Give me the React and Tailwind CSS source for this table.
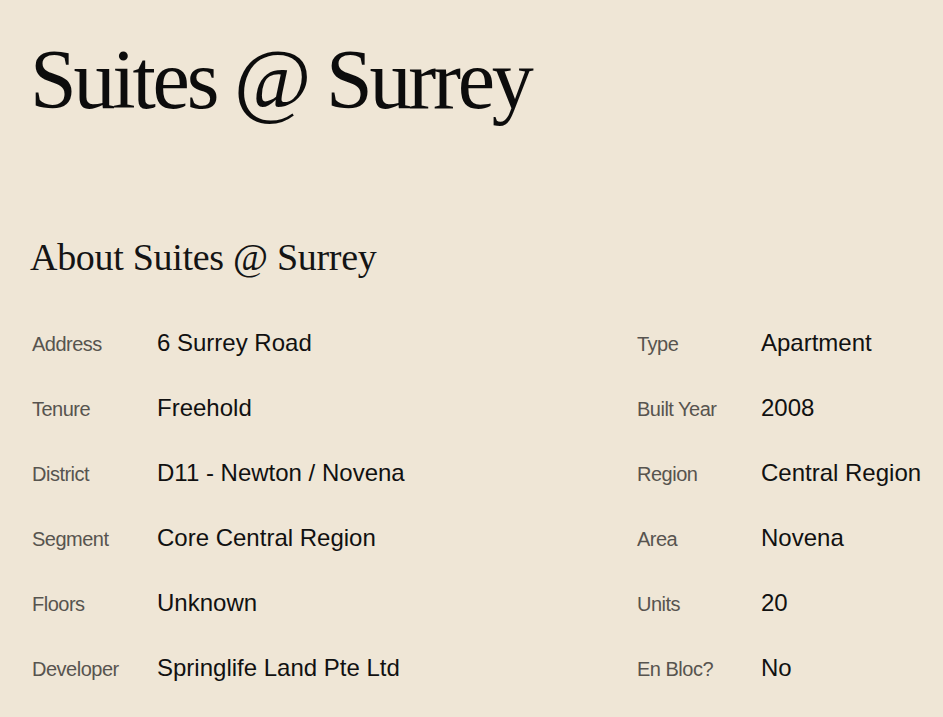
export default function App() {
  const rows = [
    ["Address", "6 Surrey Road", "Type", "Apartment"],
    ["Tenure", "Freehold", "Built Year", "2008"],
    ["District", "D11 - Newton / Novena", "Region", "Central Region"],
    ["Segment", "Core Central Region", "Area", "Novena"],
    ["Floors", "Unknown", "Units", "20"],
    ["Developer", "Springlife Land Pte Ltd", "En Bloc?", "No"],
  ];
  const Cell = ({ label, value, lw }) => (
    <div className="flex items-baseline h-[65px] leading-[65px] whitespace-nowrap">
      <span className={`${lw} shrink-0 text-[20px] tracking-[-0.5px] text-[#57544f]`} style={{ fontFamily: '"Liberation Sans", Arial, sans-serif' }}>
        {label}
      </span>
      <span className="text-[24px] text-[#111111]" style={{ fontFamily: '"Liberation Sans", Arial, sans-serif' }}>
        {value}
      </span>
    </div>
  );
  return (
    <div className="w-[943px] h-[717px] overflow-hidden bg-[#efe6d6] pl-[30px] pt-[38px]">
      <h1 className="text-[84px] leading-[84px] tracking-[-3.2px] text-[#0c0c0c] font-normal" style={{ fontFamily: '"Liberation Serif", "Times New Roman", serif' }}>
        Suites @ Surrey
      </h1>
      <h2 className="mt-[116px] text-[38px] leading-[38px] tracking-[-0.3px] text-[#141414] font-normal" style={{ fontFamily: '"Liberation Serif", "Times New Roman", serif' }}>
        About Suites @ Surrey
      </h2>
      <div className="mt-[34px] grid grid-cols-[607px_1fr]">
        {rows.map((r) => (
          <div key={r[0]} className="contents">
            <div className="pl-[2px]"><Cell label={r[0]} value={r[1]} lw="w-[125px]" /></div>
            <Cell label={r[2]} value={r[3]} lw="w-[124px]" />
          </div>
        ))}
      </div>
    </div>
  );
}
